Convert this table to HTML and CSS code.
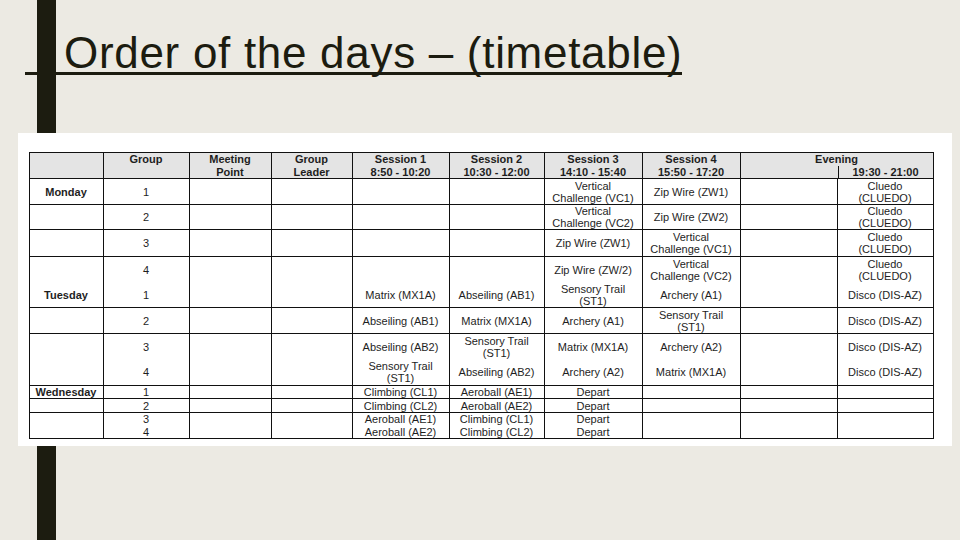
FILE: index.html
```html
<!DOCTYPE html>
<html>
<head>
<meta charset="utf-8">
<link rel="stylesheet" href="styles.css">
</head>
<body>
<h1 class="title"><span>Order of the days – (timetable)</span></h1>
<div class="sheet">
<table class="tt">
<colgroup>
<col class="c-day"><col class="c-grp"><col class="c-meet"><col class="c-lead">
<col class="c-s1"><col class="c-s2"><col class="c-s3"><col class="c-s4">
<col class="c-e1"><col class="c-e2">
</colgroup>
<thead>
<tr class="r-head">
<th></th>
<th>Group</th>
<th>Meeting<br>Point</th>
<th>Group<br>Leader</th>
<th>Session 1<br>8:50 - 10:20</th>
<th>Session 2<br>10:30 - 12:00</th>
<th>Session 3<br>14:10 - 15:40</th>
<th>Session 4<br>15:50 - 17:20</th>
<th colspan="2" class="ev"><div>Evening</div><div class="evsub"><span></span><span>19:30 - 21:00</span></div></th>
</tr>
</thead>
<tbody>
<tr class="r-26">
<td class="day">Monday</td><td>1</td><td></td><td></td><td></td><td></td>
<td>Vertical<br>Challenge (VC1)</td><td>Zip Wire (ZW1)</td><td></td><td>Cluedo<br>(CLUEDO)</td>
</tr>
<tr class="r-25">
<td></td><td>2</td><td></td><td></td><td></td><td></td>
<td>Vertical<br>Challenge (VC2)</td><td>Zip Wire (ZW2)</td><td></td><td>Cluedo<br>(CLUEDO)</td>
</tr>
<tr class="r-27">
<td></td><td>3</td><td></td><td></td><td></td><td></td>
<td>Zip Wire (ZW1)</td><td>Vertical<br>Challenge (VC1)</td><td></td><td>Cluedo<br>(CLUEDO)</td>
</tr>
<tr class="r-51">
<td><div class="half"></div><div class="half day">Tuesday</div></td>
<td><div class="half">4</div><div class="half">1</div></td>
<td></td><td></td>
<td><div class="half"></div><div class="half">Matrix (MX1A)</div></td>
<td><div class="half"></div><div class="half">Abseiling (AB1)</div></td>
<td><div class="half">Zip Wire (ZW/2)</div><div class="half">Sensory Trail<br>(ST1)</div></td>
<td><div class="half">Vertical<br>Challenge (VC2)</div><div class="half">Archery (A1)</div></td>
<td></td>
<td><div class="half">Cluedo<br>(CLUEDO)</div><div class="half">Disco (DIS-AZ)</div></td>
</tr>
<tr class="r-26">
<td></td><td>2</td><td></td><td></td>
<td>Abseiling (AB1)</td><td>Matrix (MX1A)</td><td>Archery (A1)</td><td>Sensory Trail<br>(ST1)</td><td></td><td>Disco (DIS-AZ)</td>
</tr>
<tr class="r-52">
<td></td>
<td><div class="half h26">3</div><div class="half h26">4</div></td>
<td></td><td></td>
<td><div class="half h26">Abseiling (AB2)</div><div class="half h26">Sensory Trail<br>(ST1)</div></td>
<td><div class="half h26">Sensory Trail<br>(ST1)</div><div class="half h26">Abseiling (AB2)</div></td>
<td><div class="half h26">Matrix (MX1A)</div><div class="half h26">Archery (A2)</div></td>
<td><div class="half h26">Archery (A2)</div><div class="half h26">Matrix (MX1A)</div></td>
<td></td>
<td><div class="half h26">Disco (DIS-AZ)</div><div class="half h26">Disco (DIS-AZ)</div></td>
</tr>
<tr class="r-13">
<td class="day">Wednesday</td><td>1</td><td></td><td></td>
<td>Climbing (CL1)</td><td>Aeroball (AE1)</td><td>Depart</td><td></td><td></td><td></td>
</tr>
<tr class="r-14">
<td></td><td>2</td><td></td><td></td>
<td>Climbing (CL2)</td><td>Aeroball (AE2)</td><td>Depart</td><td></td><td></td><td></td>
</tr>
<tr class="r-26 tight">
<td></td><td>3<br>4</td><td></td><td></td>
<td>Aeroball (AE1)<br>Aeroball (AE2)</td><td>Climbing (CL1)<br>Climbing (CL2)</td><td>Depart<br>Depart</td><td></td><td></td><td></td>
</tr>
</tbody>
</table>
</div>
</body>
</html>
```

FILE: styles.css
```css
html, body {
  margin: 0;
  padding: 0;
}
body {
  width: 960px;
  height: 540px;
  overflow: hidden;
  background:
    linear-gradient(90deg, transparent 37px, #1c1c10 37px, #1c1c10 56px, transparent 56px),
    #eceae3;
}
.title {
  display: flex;
  margin: 0;
  padding: 34px 0 0 25px;
  font-family: "Liberation Sans", Arial, sans-serif;
  font-weight: 400;
  font-size: 44px;
  line-height: 38px;
  letter-spacing: 0.7px;
  color: #1c1c10;
}
.title span {
  display: block;
  padding-left: 39px;
  border-bottom: 3px solid #1c1c10;
}
.sheet {
  box-sizing: border-box;
  margin: 58px 0 0 18px;
  width: 934px;
  height: 313px;
  background: #ffffff;
  padding: 19px 0 0 10.5px;
}
.tt {
  border-collapse: collapse;
  table-layout: fixed;
  width: 904px;
  font-family: "Liberation Sans", Arial, sans-serif;
  font-size: 11px;
  line-height: 12px;
  color: #1e1e1e;
}
.c-day { width: 74px; }
.c-grp { width: 86px; }
.c-meet { width: 82px; }
.c-lead { width: 81px; }
.c-s1 { width: 97px; }
.c-s2 { width: 95px; }
.c-s3 { width: 98px; }
.c-s4 { width: 98px; }
.c-e1 { width: 97px; }
.c-e2 { width: 96px; }
.tt th, .tt td {
  border: 1px solid #111;
  padding: 0;
  text-align: center;
  vertical-align: middle;
  white-space: nowrap;
  overflow: hidden;
}
.tt th {
  background: #e4e4e4;
  font-weight: 700;
  vertical-align: top;
  line-height: 12.5px;
}
.r-head { height: 26px; }
.evsub {
  display: grid;
  grid-template-columns: 97px 1fr;
}
.evsub span + span {
  border-left: 1px solid #111;
}
.day { font-weight: 700; }
.r-13 { height: 13px; }
.r-14 { height: 14px; }
.r-25 { height: 25px; }
.r-26 { height: 26px; }
.r-27 { height: 27px; }
.r-51 { height: 51px; }
.r-52 { height: 52px; }
.tight td { line-height: 12.5px; }
.half {
  height: 25px;
  display: flex;
  flex-direction: column;
  justify-content: center;
  align-items: center;
}
.half.h26 { height: 25.5px; }
```
